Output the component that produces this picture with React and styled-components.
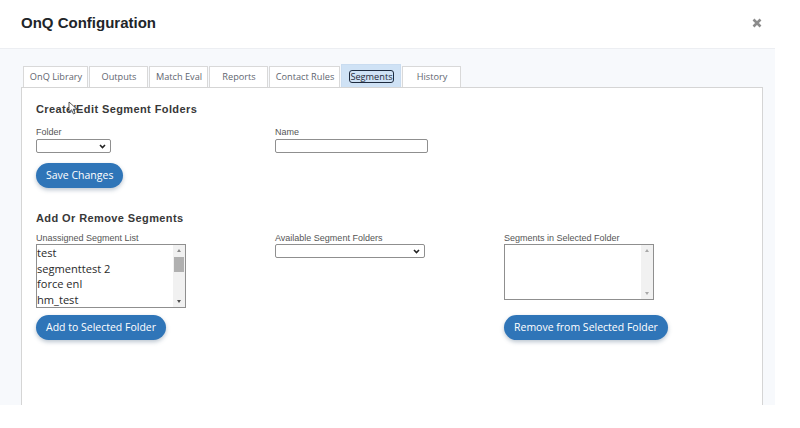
import React from "react";
import styled, { createGlobalStyle } from "styled-components";

const chevron = `url("data:image/svg+xml,%3Csvg xmlns='http://www.w3.org/2000/svg' width='7' height='5' viewBox='0 0 7 5'%3E%3Cpath d='M1 1l2.5 2.5L6 1' fill='none' stroke='%23222' stroke-width='1.6'/%3E%3C/svg%3E")`;

const Global = createGlobalStyle`
  html, body { margin: 0; padding: 0; background: #fff; }
  body { width: 800px; height: 428px; overflow: hidden; font-family: "Liberation Sans", Arial, sans-serif; }
`;
const Modal = styled.div`
  position: relative;
  width: 775px;
  height: 405px;
  display: flex;
  flex-direction: column;
  background: #fff;
`;
const Header = styled.header`
  height: 49px;
  flex: none;
  box-sizing: border-box;
  border-bottom: 1px solid #eceef2;
  display: flex;
  align-items: center;
  justify-content: space-between;
  padding: 0 13px 2px 21px;
`;
const Title = styled.h1`
  margin: 0;
  font-size: 15px;
  line-height: 18px;
  font-weight: 700;
  color: #212529;
`;
const Close = styled.span`
  display: flex;
  color: #8c8c8c;
`;
const Body = styled.div`
  flex: 1;
  min-height: 0;
  display: flex;
  flex-direction: column;
  padding: 17px 12px 0 21px;
  background: #f7f9fc;
`;
const Tabs = styled.nav`
  display: flex;
  align-items: flex-end;
  height: 21px;
  padding-left: 2px;
  gap: 1px;
  flex: none;
`;
const Tab = styled.div`
  width: ${(p) => p.$w}px;
  height: ${(p) => (p.$active ? 23 : 21)}px;
  box-sizing: border-box;
  display: flex;
  align-items: center;
  justify-content: center;
  padding-left: 1px;
  font: 9.2px/12px "Open Sans", sans-serif;
  color: ${(p) => (p.$active ? "#1f2a3a" : "#5f6670")};
  background: ${(p) => (p.$active ? "#cfe2f5" : "#fff")};
  border: 1px solid ${(p) => (p.$active ? "#c9dcf0" : "#d9d9d9")};
  border-bottom: none;
`;
const Focus = styled.span`
  border: 1.5px solid #1d2b3f;
  border-radius: 3px;
  padding: 0;
  line-height: 11px;
`;
const Panel = styled.main`
  flex: 1;
  background: #fff;
  border: 1px solid #d5d5d5;
  border-bottom: none;
  padding: 14px 14px 0;
  min-height: 0;
`;
const Heading = styled.h2`
  margin: 0;
  font-size: 11px;
  line-height: 15px;
  font-weight: 700;
  letter-spacing: 0.4px;
  color: #383838;
`;
const FormRow = styled.div`
  display: grid;
  grid-template-columns: ${(p) => p.$cols};
  margin-top: ${(p) => p.$top}px;
`;
const Field = styled.div`
  display: flex;
  flex-direction: column;
  align-items: flex-start;
  gap: ${(p) => p.$gap || 0}px;
`;
const Label = styled.label`
  font-size: 9px;
  line-height: 11px;
  color: #555;
`;
const Select = styled.select`
  appearance: none;
  width: ${(p) => p.$w}px;
  height: 14px;
  box-sizing: border-box;
  background: #fff ${chevron} no-repeat right 4px center;
  border: 1px solid #8f8f8f;
  border-radius: 2px;
  padding: 0;
  font-size: 9px;
`;
const Input = styled.input`
  width: 153px;
  height: 14px;
  box-sizing: border-box;
  border: 1px solid #8f8f8f;
  border-radius: 2px;
  padding: 0;
  background: #fff;
`;
const Button = styled.button`
  height: 25px;
  box-sizing: border-box;
  border: none;
  border-radius: 13px;
  padding: 0 10px;
  background: #2f75b8;
  color: #fff;
  font: 500 10.5px/25px "Open Sans", sans-serif;
  box-shadow: 0 2px 4px rgba(60, 90, 120, 0.35);
  white-space: nowrap;
`;
const SaveRow = styled.div`
  margin-top: 10px;
`;
const ListBox = styled.div`
  width: 150px;
  height: ${(p) => p.$h}px;
  box-sizing: border-box;
  border: 1px solid #8f8f8f;
  display: flex;
  background: #fff;
  overflow: hidden;
`;
const Options = styled.ul`
  flex: 1;
  margin: 0;
  padding: 0;
  list-style: none;
  font: 11.1px/15.7px "Open Sans", sans-serif;
  color: #2a2a2a;
`;
const Scrollbar = styled.div`
  width: 12px;
  flex: none;
  background: #f1f1f1;
  display: flex;
  flex-direction: column;
  align-items: center;
  justify-content: space-between;
  padding: 4px 0;
  box-sizing: border-box;
  position: relative;
`;
const Arrow = styled.span`
  width: 0;
  height: 0;
  border-left: 2.5px solid transparent;
  border-right: 2.5px solid transparent;
  ${(p) => (p.$up ? "border-bottom" : "border-top")}: 3px solid ${(p) => p.$c};
`;
const Thumb = styled.span`
  position: absolute;
  left: 1px;
  right: 1px;
  top: 12px;
  height: 15px;
  background: #b0b0b0;
`;
const Cursor = styled.svg`
  position: absolute;
  left: 68px;
  top: 101px;
`;

function List({ h, items, thumb }) {
  return (
    <ListBox $h={h}>
      <Options>
        {items.map((t) => (
          <li key={t}>{t}</li>
        ))}
      </Options>
      <Scrollbar>
        <Arrow $up $c={thumb ? "#8a8a8a" : "#a8a8a8"} />
        {thumb && <Thumb />}
        <Arrow $c={thumb ? "#505050" : "#a8a8a8"} />
      </Scrollbar>
    </ListBox>
  );
}

const tabs = [
  ["OnQ Library", 65],
  ["Outputs", 59],
  ["Match Eval", 59],
  ["Reports", 59],
  ["Contact Rules", 71],
];

export default function App() {
  return (
    <>
      <Global />
      <Modal>
        <Header>
          <Title>OnQ Configuration</Title>
          <Close>
            <svg width="10" height="10" viewBox="0 0 10 10">
              <path d="M1.5 1.5 8.5 8.5M8.5 1.5 1.5 8.5" stroke="currentColor" strokeWidth="2.6" />
            </svg>
          </Close>
        </Header>
        <Body>
          <Tabs>
            {tabs.map(([t, w]) => (
              <Tab key={t} $w={w}>
                {t}
              </Tab>
            ))}
            <Tab $w={60} $active>
              <Focus>Segments</Focus>
            </Tab>
            <Tab $w={59}>History</Tab>
          </Tabs>
          <Panel>
            <Heading>Create/Edit Segment Folders</Heading>
            <FormRow $cols="239px 1fr" $top={10}>
              <Field $gap={1}>
                <Label>Folder</Label>
                <Select $w={75} />
              </Field>
              <Field $gap={1}>
                <Label>Name</Label>
                <Input />
              </Field>
            </FormRow>
            <SaveRow>
              <Button>Save Changes</Button>
            </SaveRow>
            <FormRow $cols="1fr" $top={23}>
              <Heading>Add Or Remove Segments</Heading>
            </FormRow>
            <FormRow $cols="239px 229px 1fr" $top={7}>
              <Field>
                <Label>Unassigned Segment List</Label>
                <List h={64} thumb items={["test", "segmenttest 2", "force enl", "hm_test"]} />
              </Field>
              <Field>
                <Label>Available Segment Folders</Label>
                <Select $w={150} />
              </Field>
              <Field>
                <Label>Segments in Selected Folder</Label>
                <List h={56} items={[]} />
              </Field>
            </FormRow>
            <FormRow $cols="468px 1fr" $top={7}>
              <Field>
                <Button>Add to Selected Folder</Button>
              </Field>
              <Field>
                <Button>Remove from Selected Folder</Button>
              </Field>
            </FormRow>
          </Panel>
        </Body>
        <Cursor width="10" height="14" viewBox="0 0 10 14">
          <path d="M1 1v10l2.5-2.2L5.5 13l1.6-.8L5.2 8.2H9z" fill="#fff" stroke="#333" strokeWidth="0.8" />
        </Cursor>
      </Modal>
    </>
  );
}
